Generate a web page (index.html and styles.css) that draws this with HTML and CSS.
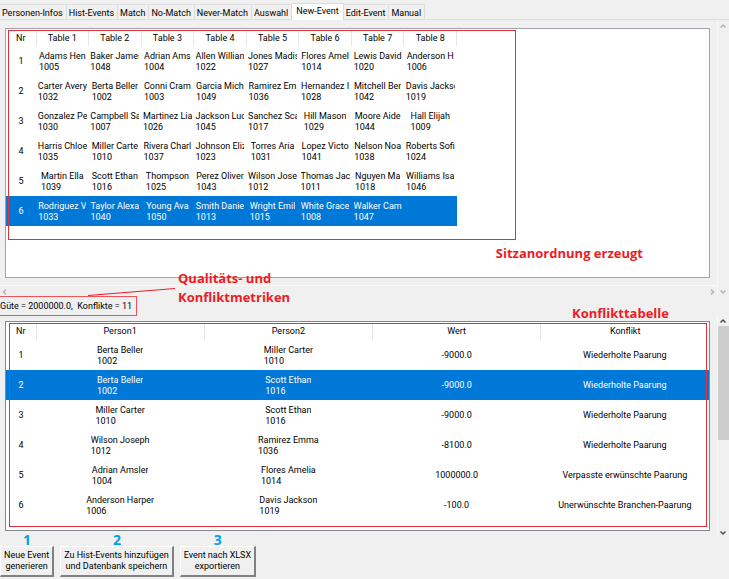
FILE: index.html
```html
<!DOCTYPE html>
<html lang="de">
<head>
<meta charset="utf-8">
<title>New-Event</title>
<link rel="stylesheet" href="styles.css">
</head>
<body>
<nav class="tabs" role="tablist">
  <button class="tab" role="tab">Personen-Infos</button>
  <button class="tab" role="tab">Hist-Events</button>
  <button class="tab" role="tab">Match</button>
  <button class="tab" role="tab">No-Match</button>
  <button class="tab" role="tab">Never-Match</button>
  <button class="tab" role="tab">Auswahl</button>
  <button class="tab active" role="tab" aria-selected="true">New-Event</button>
  <button class="tab" role="tab">Edit-Event</button>
  <button class="tab" role="tab">Manual</button>
</nav>
<main>
  <section class="pane seating">
    <div class="view">
      <div class="panel">
        <table class="seats">
          <thead><tr><th class="nr">Nr</th><th>Table 1</th><th>Table 2</th><th>Table 3</th><th>Table 4</th><th>Table 5</th><th>Table 6</th><th>Table 7</th><th>Table 8</th></tr></thead>
          <tbody>
            <tr><td>1</td><td><span>Adams Hen<br>1005</span></td><td><span>Baker James<br>1048</span></td><td><span>Adrian Ams<br>1004</span></td><td><span>Allen Willian<br>1022</span></td><td><span>Jones Madis<br>1027</span></td><td><span>Flores Amel<br>1014</span></td><td><span>Lewis David<br>1020</span></td><td><span>Anderson H<br>1006</span></td></tr>
            <tr><td>2</td><td><span>Carter Avery<br>1032</span></td><td><span>Berta Beller<br>1002</span></td><td><span>Conni Cram<br>1003</span></td><td><span>Garcia Mich<br>1049</span></td><td><span>Ramirez Em<br>1036</span></td><td><span>Hernandez I<br>1028</span></td><td><span>Mitchell Ber<br>1042</span></td><td><span>Davis Jackso<br>1019</span></td></tr>
            <tr><td>3</td><td><span>Gonzalez Pe<br>1030</span></td><td><span>Campbell Sa<br>1007</span></td><td><span>Martinez Lia<br>1026</span></td><td><span>Jackson Luc<br>1045</span></td><td><span>Sanchez Sca<br>1017</span></td><td><span>Hill Mason<br>1029</span></td><td><span>Moore Aide<br>1044</span></td><td><span>Hall Elijah<br>1009</span></td></tr>
            <tr><td>4</td><td><span>Harris Chloe<br>1035</span></td><td><span>Miller Carte<br>1010</span></td><td><span>Rivera Charl<br>1037</span></td><td><span>Johnson Eliz<br>1023</span></td><td><span>Torres Aria<br>1031</span></td><td><span>Lopez Victo<br>1041</span></td><td><span>Nelson Noa<br>1038</span></td><td><span>Roberts Sofi<br>1024</span></td></tr>
            <tr><td>5</td><td><span>Martin Ella<br>1039</span></td><td><span>Scott Ethan<br>1016</span></td><td><span>Thompson<br>1025</span></td><td><span>Perez Oliver<br>1043</span></td><td><span>Wilson Jose<br>1012</span></td><td><span>Thomas Jac<br>1011</span></td><td><span>Nguyen Ma<br>1018</span></td><td><span>Williams Isa<br>1046</span></td></tr>
            <tr class="selected"><td>6</td><td><span>Rodriguez V<br>1033</span></td><td><span>Taylor Alexa<br>1040</span></td><td><span>Young Ava<br>1050</span></td><td><span>Smith Danie<br>1013</span></td><td><span>Wright Emil<br>1015</span></td><td><span>White Grace<br>1008</span></td><td><span>Walker Cam<br>1047</span></td><td></td></tr>
          </tbody>
        </table>
        <div class="frame seat-frame"></div>
        <p class="note seat-note">Sitzanordnung erzeugt</p>
      </div>
      <div class="hscroll">
        <button class="arrow" aria-label="Nach links"><svg viewBox="0 0 8 8"><path d="M5 1.5 2.5 4 5 6.5"/></svg></button>
        <button class="arrow" aria-label="Nach rechts"><svg viewBox="0 0 8 8"><path d="M3 1.5 5.500 4 3 6.500"/></svg></button>
      </div>
    </div>
    <div class="vscroll idle">
      <button class="arrow" aria-label="Nach oben"><svg viewBox="0 0 8 8"><path d="M1.500 5.500 4 3 6.500 5.500"/></svg></button>
      <button class="arrow" aria-label="Nach unten"><svg viewBox="0 0 8 8"><path d="M1.500 2.500 4 5 6.500 2.500"/></svg></button>
    </div>
  </section>

  <div class="status">
    <p class="metrics">Güte = 2000000.0,&nbsp; Konflikte = 11</p>
    <svg class="pointer" viewBox="0 0 88 8"><path d="M0 7.500 87 .5"/></svg>
    <p class="note metrics-note">Qualitäts- und<br>Konfliktmetriken</p>
    <p class="note conflict-note">Konflikttabelle</p>
  </div>

  <section class="pane conflicts">
    <div class="view">
      <div class="panel">
        <table class="pairs">
          <thead><tr><th class="nr">Nr</th><th>Person1</th><th>Person2</th><th>Wert</th><th>Konflikt</th></tr></thead>
          <tbody>
            <tr><td>1</td><td><span>Berta Beller<br>1002</span></td><td><span>Miller Carter<br>1010</span></td><td>-9000.0</td><td>Wiederholte Paarung</td></tr>
            <tr class="selected"><td>2</td><td><span>Berta Beller<br>1002</span></td><td><span>Scott Ethan<br>1016</span></td><td>-9000.0</td><td>Wiederholte Paarung</td></tr>
            <tr><td>3</td><td><span>Miller Carter<br>1010</span></td><td><span>Scott Ethan<br>1016</span></td><td>-9000.0</td><td>Wiederholte Paarung</td></tr>
            <tr><td>4</td><td><span>Wilson Joseph<br>1012</span></td><td><span>Ramirez Emma<br>1036</span></td><td>-8100.0</td><td>Wiederholte Paarung</td></tr>
            <tr><td>5</td><td><span>Adrian Amsler<br>1004</span></td><td><span>Flores Amelia<br>1014</span></td><td>1000000.0</td><td>Verpasste erwünschte Paarung</td></tr>
            <tr><td>6</td><td><span>Anderson Harper<br>1006</span></td><td><span>Davis Jackson<br>1019</span></td><td>-100.0</td><td>Unerwünschte Branchen-Paarung</td></tr>
          </tbody>
        </table>
        <div class="frame pair-frame"></div>
      </div>
    </div>
    <div class="vscroll">
      <button class="arrow" aria-label="Nach oben"><svg viewBox="0 0 8 8"><path d="M1.500 5.500 4 3 6.500 5.500"/></svg></button>
      <div class="thumb"></div>
      <button class="arrow" aria-label="Nach unten"><svg viewBox="0 0 8 8"><path d="M1.500 2.500 4 5 6.500 2.500"/></svg></button>
    </div>
  </section>
</main>

<footer class="actions">
  <div class="action"><span class="step">1</span><button class="cmd">Neue Event<br>generieren</button></div>
  <div class="action"><span class="step">2</span><button class="cmd">Zu Hist-Events hinzufügen<br>und Datenbank speichern</button></div>
  <div class="action"><span class="step">3</span><button class="cmd">Event nach XLSX<br>exportieren</button></div>
</footer>
</body>
</html>
```
FILE: styles.css
```css
* { box-sizing: border-box; }

body {
  margin: 0;
  background: #f0f0f0;
  color: #000;
  font: 9px/11px Roboto, "Open Sans", sans-serif;
}

button {
  margin: 0;
  padding: 0;
  border: 0;
  background: none;
  color: inherit;
  font: inherit;
}

p { margin: 0; }

/* Tabs */
.tabs {
  display: flex;
  align-items: flex-end;
  height: 20px;
  border-bottom: 1px solid #dcdcdc;
}

.tab {
  height: 15px;
  padding: 2px 3px 0 2px;
  border: solid #dcdcdc;
  border-width: 1px 1px 0 0;
  white-space: nowrap;
}

.tab.active {
  height: 17px;
  margin-bottom: -1px;
  padding: 0 4px 1px;
  background: #fff;
}

/* Panes */
.pane { display: flex; }

.view { flex: 1; min-width: 0; }

.panel {
  position: relative;
  margin: 0 8px 0 5px;
  padding: 1px 0;
  border: 1px solid #a0a3aa;
  background: #fff;
}

.seating .view { padding-top: 8px; }
.seating .panel { min-height: 250px; }

.conflicts { margin-top: -6px; }
.conflicts .view { padding: 6px 0 7px; }
.conflicts .panel { min-height: 210px; border-color: #828790; }

/* Tables */
table {
  table-layout: fixed;
  border-collapse: collapse;
}

.seats { width: 451px; }
.pairs { width: 100%; }

th, td {
  padding: 0;
  text-align: center;
  font-weight: 400;
}

th {
  height: 16px;
  border-right: 1px solid #e5e5e5;
}

.pairs th { height: 17px; }
.pairs th:last-child { border-right: 0; }

.nr { width: 30px; }

td {
  height: 30px;
  padding-top: 1px;
  white-space: nowrap;
}

td span {
  display: inline-block;
  max-width: 49px;
  overflow: hidden;
  text-align: left;
  vertical-align: middle;
}

.pairs td span { max-width: none; }

.selected {
  background: #0078d7;
  color: #fff;
}

/* Scrollbars */
.vscroll {
  display: flex;
  flex-direction: column;
  width: 11px;
  background: #f0f0f0;
  box-shadow: -1px 0 #f8f8f8;
}

.vscroll .arrow:last-child { margin-top: auto; }

.hscroll {
  display: flex;
  justify-content: space-between;
  margin-top: 7px;
  border-top: 1px solid #fafafa;
}

.arrow {
  display: block;
  width: 11px;
  height: 11px;
}

.arrow svg {
  display: block;
  width: 8px;
  height: 8px;
  margin: 1px;
  fill: none;
  stroke: #505050;
  stroke-width: 1.5;
}

.idle svg, .hscroll svg { stroke: #b4b4b4; }

.thumb {
  height: 114px;
  background: #cdcdcd;
}

/* Status line */
.status {
  position: relative;
  display: flex;
  height: 24px;
}

.metrics {
  height: 20px;
  margin-top: -1px;
  padding: 4px 4px 0 0;
  border: 1px solid #f0525a;
  border-left: 0;
}

/* Annotations */
.frame {
  position: absolute;
  border: 1px solid #e0303a;
  pointer-events: none;
}

.seat-frame { top: 1px; left: 2px; width: 508px; height: 210px; }
.pair-frame { inset: 1px 2px 3px 3px; }

.note {
  position: absolute;
  color: #ed1c24;
  font: 700 13px/19px "Open Sans", sans-serif;
  white-space: nowrap;
}

.seat-note { top: 215px; right: 66px; }
.metrics-note { top: -28px; left: 178px; }
.conflict-note { top: 7px; right: 60px; }

.pointer {
  position: absolute;
  top: -9px;
  left: 88px;
  width: 88px;
  height: 8px;
  fill: none;
  stroke: #ed1c24;
}

/* Actions */
.actions {
  display: flex;
  gap: 6px;
  margin-top: -4px;
}

.action {
  display: flex;
  flex-direction: column;
}

.step {
  height: 12px;
  color: #00a2e8;
  font: 700 14px/12px "Open Sans", sans-serif;
  text-align: center;
}

.cmd {
  height: 31px;
  padding: 0 3px;
  border: 1px solid #fff;
  border-right: 2px solid #808080;
  border-bottom: 2px solid #808080;
  white-space: nowrap;
}
```
